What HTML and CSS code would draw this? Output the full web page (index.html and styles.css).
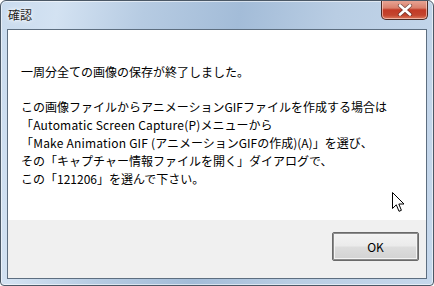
FILE: index.html
```html
<!DOCTYPE html>
<html lang="ja">
<head>
<meta charset="utf-8">
<link rel="stylesheet" href="styles.css">
</head>
<body>
<div class="window">
  <div class="titlebar">
    <span class="title">確認</span>
    <div class="close">
      <svg width="16" height="12" viewBox="0 0 16 12">
        <path d="M3 1.5 L13 10.5 M13 1.5 L3 10.5" stroke="#3a2a2a" stroke-width="4.2" stroke-linecap="round" opacity="0.55"/>
        <path d="M3 1.5 L13 10.5 M13 1.5 L3 10.5" stroke="#ffffff" stroke-width="2.6" stroke-linecap="round"/>
      </svg>
    </div>
  </div>
  <div class="client">
    <div class="content">
      <p class="msg">一周分全ての画像の保存が終了しました。</p>
      <p class="msg">この画像ファイルからアニメーションGIFファイルを作成する場合は<br><span class="lat">「Automatic Screen Capture(P)</span>メニューから<br><span class="lat">「Make Animation GIF (</span>アニメーションGIFの作成)(A)」を選び、<br>その「キャプチャー情報ファイルを開く」ダイアログで、<br>この「121206」を選んで下さい。</p>
    </div>
    <div class="footer">
      <button class="ok">OK</button>
    </div>
  </div>
  <svg class="cursor" width="13" height="21" viewBox="0 0 13 21">
    <path d="M0.5 0.5 L0.5 16.5 L4.3 12.8 L7 19.3 L9.4 18.3 L6.8 12 L12 12 Z" fill="#ffffff" stroke="#000000" stroke-width="1" stroke-linejoin="miter"/>
  </svg>
</div>
</body>
</html>
```

FILE: styles.css
```css
html, body {
  margin: 0;
  padding: 0;
  background: #ffffff;
}
body {
  font-family: "Noto Sans CJK JP", "Noto Sans", sans-serif;
}
.window {
  position: relative;
  width: 434px;
  height: 286px;
  box-sizing: border-box;
  border: 1px solid #4b5866;
  border-radius: 6px 6px 4px 4px;
  background: linear-gradient(100deg, #c9dbee 0%, #d3e2f2 12%, #b6cbe2 30%, #a3bcd8 50%, #b9cde3 70%, #c6d8ec 100%);
  box-shadow: inset 0 0 0 1px rgba(255,255,255,0.55);
  display: flex;
  flex-direction: column;
  padding: 0 6px 6px 6px;
  overflow: hidden;
}
.titlebar {
  height: 28px;
  display: flex;
  justify-content: space-between;
  align-items: flex-start;
}
.title {
  margin-top: 6px;
  margin-left: 1px;
  font-size: 12px;
  line-height: 16px;
  color: #1e1e1e;
  text-shadow: 0 0 6px #ffffff, 0 0 3px #ffffff;
}
.close {
  width: 47px;
  height: 20px;
  box-sizing: border-box;
  margin-right: -1px;
  margin-top: -1px;
  border: 1px solid #4a2a24;
  border-top: none;
  border-radius: 0 0 5px 5px;
  background: linear-gradient(180deg, #e9a898 0%, #d9806c 42%, #c23a26 52%, #c4452e 80%, #dc7a5e 100%);
  box-shadow: inset 0 0 0 1px rgba(255,220,210,0.6);
  display: flex;
  align-items: center;
  justify-content: center;
}
.client {
  flex: 1;
  display: flex;
  flex-direction: column;
  border: 1px solid #5d6e80;
}
.content {
  flex: 1;
  background: #ffffff;
  padding: 33px 0 0 13px;
}
.msg {
  margin: 0 0 17px 0;
  font-size: 12px;
  line-height: 18px;
  color: #000000;
  white-space: nowrap;
}
.lat {
  letter-spacing: 0.2px;
}
.footer {
  height: 58px;
  background: #f0f0f0;
  display: flex;
  justify-content: flex-end;
  align-items: flex-start;
  padding: 12px 7px 0 0;
  box-sizing: border-box;
}
.ok {
  width: 87px;
  height: 29px;
  box-sizing: border-box;
  border: 1px solid #6a6a6a;
  border-radius: 2px;
  box-shadow: inset 0 0 0 1px #8c8c8c, inset 0 0 0 2px #f4f4f4;
  background: linear-gradient(180deg, #f3f3f3 0%, #ebebeb 48%, #dddddd 52%, #d2d2d2 100%);
  font-family: "Noto Sans CJK JP", "Noto Sans", sans-serif;
  font-size: 12px;
  color: #000000;
  padding: 0;
}
.cursor {
  position: absolute;
  left: 391px;
  top: 191px;
}
```
